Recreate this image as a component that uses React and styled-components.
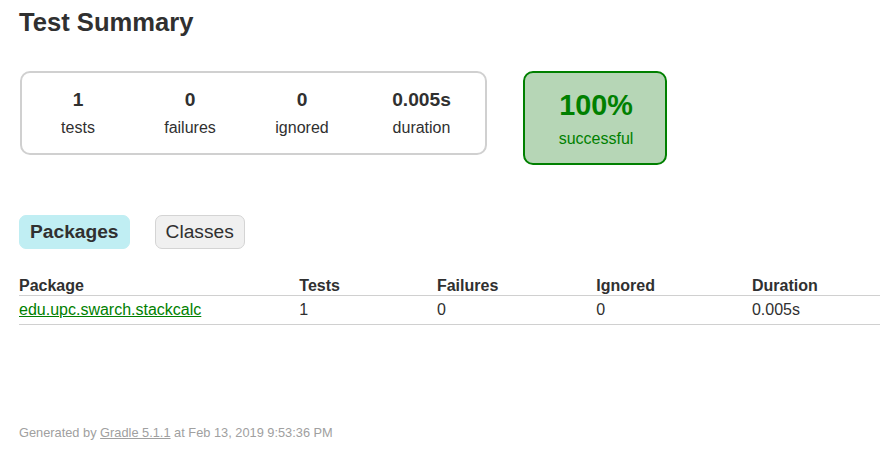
import React from "react";
import styled, { createGlobalStyle } from "styled-components";

const GlobalStyle = createGlobalStyle`
  html, body { margin: 0; padding: 0; background: #ffffff; }
  body {
    font-family: "Liberation Sans", Arial, Helvetica, sans-serif;
    font-size: 16px;
    color: #303030;
    overflow: hidden;
  }
`;

const Content = styled.div`
  padding: 7px 0 0 19px;
`;

const Title = styled.h1`
  margin: 0;
  font-size: 25.6px;
  line-height: 30px;
  font-weight: bold;
  white-space: nowrap;
`;

const SummaryRow = styled.div`
  display: flex;
  align-items: flex-start;
  margin-top: 34px;
  padding-left: 1px;
`;

const SummaryGroup = styled.div`
  display: flex;
  border: solid 2px #d0d0d0;
  border-radius: 10px;
  padding: 1px 0;
`;

const InfoBox = styled.div`
  width: ${(p) => p.$w}px;
  margin: 0 1px;
  padding: 15px 0;
  text-align: center;
`;

const Counter = styled.div`
  font-size: 19.2px;
  font-weight: bold;
  margin-bottom: 8px;
`;

const Label = styled.div`
  font-size: 16px;
`;

const SuccessRate = styled.div`
  width: 140px;
  margin-left: 36px;
  border: solid 2px #008000;
  border-radius: 10px;
  background-color: #b6d6b6;
  color: #008000;
  padding: 1px 0 0;
`;

const Percent = styled.div`
  font-size: 28.8px;
  font-weight: bold;
  margin-bottom: 8px;
`;

const TabList = styled.ul`
  display: flex;
  list-style: none;
  margin: 50px 0 0 0;
  padding: 0;
`;

const Tab = styled.li`
  padding: 5px 10px;
  margin-right: 25px;
  border-radius: 7px;
  border: solid 1px ${(p) => (p.$selected ? "#c0eef3" : "#d4d4d4")};
  background-color: ${(p) => (p.$selected ? "#c0eef3" : "#f0f0f0")};
  font-size: 19.2px;
  line-height: 22px;
  font-weight: ${(p) => (p.$selected ? "bold" : "normal")};
  color: #303030;
`;

const Table = styled.table`
  margin-top: 28px;
  width: 100%;
  border-collapse: collapse;
  border-bottom: solid #d0d0d0 1px;
`;

const Th = styled.th`
  text-align: left;
  white-space: nowrap;
  padding: 0 0 0 ${(p) => p.$pad}px;
  border-bottom: solid #d0d0d0 1px;
  font-weight: bold;
  ${(p) => (p.$last ? "width: 100%;" : "")}
`;

const Td = styled.td`
  white-space: nowrap;
  line-height: 18px;
  padding: 5px 0 5px ${(p) => p.$pad}px;
`;

const PkgLink = styled.a`
  color: #008000;
  text-decoration: underline;
`;

const Footer = styled.div`
  margin-top: 100px;
  font-size: 12.8px;
  color: #a0a0a0;
  white-space: nowrap;
`;

const FooterLink = styled.a`
  color: #a0a0a0;
  text-decoration: underline;
`;

const stats = [
  { value: "1", label: "tests", w: 110 },
  { value: "0", label: "failures", w: 110 },
  { value: "0", label: "ignored", w: 110 },
  { value: "0.005s", label: "duration", w: 125 },
];

const columns = [
  { title: "Package", pad: 0 },
  { title: "Tests", pad: 98 },
  { title: "Failures", pad: 97 },
  { title: "Ignored", pad: 98 },
  { title: "Duration", pad: 97 },
];

export default function App() {
  return (
    <>
      <GlobalStyle />
      <Content>
        <Title>Test Summary</Title>
        <SummaryRow>
          <SummaryGroup>
            {stats.map((s) => (
              <InfoBox key={s.label} $w={s.w}>
                <Counter>{s.value}</Counter>
                <Label>{s.label}</Label>
              </InfoBox>
            ))}
          </SummaryGroup>
          <SuccessRate>
            <InfoBox $w={140}>
              <Percent>100%</Percent>
              <Label>successful</Label>
            </InfoBox>
          </SuccessRate>
        </SummaryRow>
        <TabList>
          <Tab $selected>Packages</Tab>
          <Tab>Classes</Tab>
        </TabList>
        <Table>
          <thead>
            <tr>
              {columns.map((c, i) => (
                <Th key={c.title} $pad={c.pad} $last={i === columns.length - 1}>
                  {c.title}
                </Th>
              ))}
            </tr>
          </thead>
          <tbody>
            <tr>
              <Td $pad={columns[0].pad}>
                <PkgLink href="#">edu.upc.swarch.stackcalc</PkgLink>
              </Td>
              <Td $pad={columns[1].pad}>1</Td>
              <Td $pad={columns[2].pad}>0</Td>
              <Td $pad={columns[3].pad}>0</Td>
              <Td $pad={columns[4].pad}>0.005s</Td>
            </tr>
          </tbody>
        </Table>
        <Footer>
          Generated by <FooterLink href="#">Gradle 5.1.1</FooterLink> at Feb 13, 2019 9:53:36 PM
        </Footer>
      </Content>
    </>
  );
}
